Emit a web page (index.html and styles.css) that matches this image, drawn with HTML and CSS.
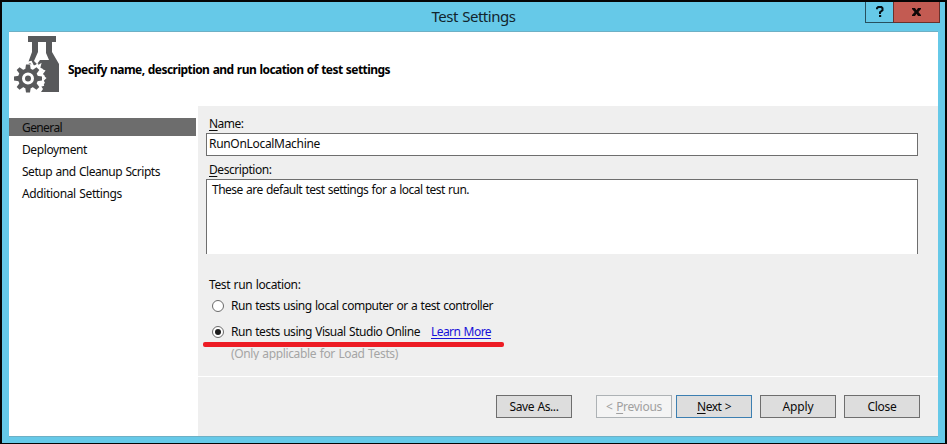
FILE: index.html
```html
<!DOCTYPE html>
<html lang="en">
<head>
<meta charset="utf-8">
<title>Test Settings</title>
<link rel="stylesheet" href="styles.css">
</head>
<body>
<div class="window">
  <header class="titlebar">
    <h1><span class="t" data-w="84">Test Settings</span></h1>
    <div class="caption-buttons">
      <button class="help" aria-label="Help"><svg width="8" height="12" viewBox="0 0 8 12"><path d="M1 3.2V2.2L2.2 1H5.4L6.5 2.2V4.2L4 6.3V8M3 10H5.2" fill="none" stroke="#051015" stroke-width="2"/></svg></button>
      <button class="exit" aria-label="Close window"><svg width="10" height="8" viewBox="0 0 10 8"><path d="M0 0H3L4.500 2.300L6 0H9V1L6.400 4L9 7V8H6L4.500 5.700L3 8H0V7L2.600 4L0 1Z" fill="#100808"/></svg></button>
    </div>
  </header>
  <div class="client">
    <div class="banner">
      <svg class="flask" width="48" height="58" viewBox="0 0 48 58">
        <path fill="#58595b" d="M14 1H42V7H38V17L45 29V57H27L29 54L27 51L31 48L29 44L31 41L28 38L29 34L25 32L24 28L20 31L14 28L18 17V7H14Z"/>
        <path fill="#fff" d="M24 7H32V18L35 25H26L23 29L20 26L24 17Z"/>
        <path fill="none" stroke="#fff" stroke-width="2" d="M12 28L17 27L19 31L23 32L26 30L25 34L30 36L27 40L31 43L28 46L29 50L26 51L24 57"/>
        <g fill="#58595b"><circle cx="14" cy="43.500" r="10"/>
        <path id="tooth" d="M12 29.500H16L17 36H11Z"/>
        <use href="#tooth" transform="rotate(45 14 43.500)"/><use href="#tooth" transform="rotate(90 14 43.500)"/><use href="#tooth" transform="rotate(135 14 43.500)"/><use href="#tooth" transform="rotate(180 14 43.500)"/><use href="#tooth" transform="rotate(225 14 43.500)"/><use href="#tooth" transform="rotate(270 14 43.500)"/><use href="#tooth" transform="rotate(315 14 43.500)"/></g>
        <circle cx="14" cy="43.500" r="4.500" fill="#58595b" stroke="#fff" stroke-width="3"/>
      </svg>
      <h2><span class="t" data-w="322">Specify name, description and run location of test settings</span></h2>
    </div>
    <nav class="steps">
      <a class="current"><span class="t" data-w="40">General</span></a>
      <a><span class="t" data-w="65">Deployment</span></a>
      <a><span class="t" data-w="138">Setup and Cleanup Scripts</span></a>
      <a><span class="t" data-w="100">Additional Settings</span></a>
    </nav>
    <main class="panel">
      <label class="name-label"><span class="t" data-w="34.5"><u>N</u>ame:</span></label>
      <div class="name-box"><span class="t" data-w="111">RunOnLocalMachine</span></div>
      <label class="desc-label"><span class="t" data-w="62.5"><u>D</u>escription:</span></label>
      <div class="desc-box"><span class="t" data-w="257">These are default test settings for a local test run.</span></div>
      <p class="location"><span class="t" data-w="91.5">Test run location:</span></p>
      <div class="option"><i class="radio"></i><span class="t" data-w="262">Run tests using local computer or a test controller</span></div>
      <div class="option online"><i class="radio on"></i><span class="t" data-w="189">Run tests using Visual Studio Online</span><a class="link t" data-w="60">Learn More</a><b class="marker"></b></div>
      <p class="note"><span class="t" data-w="167">(Only applicable for Load Tests)</span></p>
      <footer class="actions">
        <button class="save"><span class="t" data-w="49">Save As...</span></button>
        <button disabled><span class="t" data-w="56">&lt; <u>P</u>revious</span></button>
        <button class="next"><span class="t" data-w="34"><u>N</u>ext &gt;</span></button>
        <button class="apply"><span class="t" data-w="31">Apply</span></button>
        <button class="close"><span class="t" data-w="29">Close</span></button>
      </footer>
    </main>
  </div>
</div>
<script src="fit.js"></script>
</body>
</html>
```
FILE: fit.js
```js
// Tracks each label so that it fills its nominal width.
document.querySelectorAll('.t').forEach(function (el) {
  var want = parseFloat(el.dataset.w);
  var have = el.getBoundingClientRect().width;
  el.style.letterSpacing = ((want - have) / el.textContent.length).toFixed(3) + 'px';
});
```
FILE: styles.css
```css
* { box-sizing: border-box; }
body { margin: 0; overflow: hidden; background: #000; color: #0b0b0b; font: 12px/16px "Noto Sans", "Open Sans", sans-serif; }
h1, h2, p { margin: 0; font-weight: 400; }
button { font: inherit; color: inherit; padding: 0; border-radius: 0; }
.t { white-space: nowrap; display: inline-block; word-spacing: 0.7px; }
u { text-underline-offset: 2px; text-decoration-thickness: 1px; text-decoration-skip-ink: none; }
.window { width: 947px; height: 444px; border: 2px solid #050505; border-width: 2px 2px 1px 2px; background: #66c9e8; padding: 0 7px 6px; }
.titlebar { height: 29px; display: grid; grid-template-columns: 1fr auto 1fr; align-items: start; }
h1 { grid-column: 2; font-size: 15px; line-height: 20px; padding-top: 4px; color: #12252d; }
.caption-buttons { display: flex; justify-self: end; margin-right: -2px; }
.caption-buttons button { height: 21px; border: 1px solid #27505e; border-top: 0; display: grid; place-items: center; background: #66c9e8; }
.caption-buttons .help { width: 29px; margin-right: -1px; }
.caption-buttons .exit { width: 47px; background: #c35b52; border-color: #69312c; }
.client { height: 406px; border-top: 1px solid #6eb0c5; border-bottom: 1px solid #6eb0c5; background: #fff; display: grid; grid-template: 74px 330px / 189px 1fr; }
.banner { grid-column: 1 / 3; display: flex; }
.flask { margin: 3px 0 0 5px; width: 48px; flex: none; }
h2 { font-size: 12px; font-weight: 700; padding: 30px 0 0 6px; color: #000; }
.steps { padding-top: 12px; }
.steps a { display: block; height: 18px; line-height: 16px; margin: 0 2px 4px 0; padding: 2px 0 0 13px; }
.steps .current { background: #6d6d6d; }
.panel { background: #efefef; padding: 9px 0 0 8px; }
label { display: block; height: 18px; padding: 1px 0 0 3px; }
.name-box { width: 712px; height: 23px; border: 1px solid #6e6e6e; background: #fff; padding: 2px 0 0 2px; }
.desc-label { margin-top: 5px; }
.desc-box { width: 712px; height: 75px; border: 1px solid #6e6e6e; border-bottom: 0; background: #fff; padding: 2px 0 0 5px; }
.location { padding: 23px 0 0 3px; height: 42px; }
.option { display: flex; align-items: center; height: 20px; padding-left: 6px; position: relative; }
.online { margin-top: 6px; }
.radio { width: 12px; height: 12px; border: 1px solid #6a6a6a; border-radius: 50%; background: #fff; margin: -1px 7px 0 0; display: grid; place-items: center; }
.on::after { content: ""; width: 6px; height: 6px; border-radius: 50%; background: #1c1c1c; }
.link { color: #1710d8; text-decoration: underline; text-underline-offset: 2px; margin-left: 11px; }
.marker { position: absolute; left: -3px; top: 20px; width: 301px; height: 5px; border-radius: 2px; background: #ed1c24; }
.note { color: #a5a5a5; padding: 4px 0 0 25px; height: 18px; overflow: hidden; }
.actions { margin: 16px 0 0 -8px; border-top: 1px solid #fff; display: flex; padding: 18px 0 0 298px; }
.actions button { width: 76px; height: 23px; border: 1px solid #6e6e6e; background: #dddddd; margin-right: 4px; display: grid; place-items: center; }
.actions .save { margin-right: 24px; }
.actions .next { border-color: #3c7fb1; margin-right: 8px; }
.actions .apply { margin-right: 8px; }
.actions button:disabled { color: #a0a0a0; border-color: #adb2b5; background: #f4f4f4; }
```
